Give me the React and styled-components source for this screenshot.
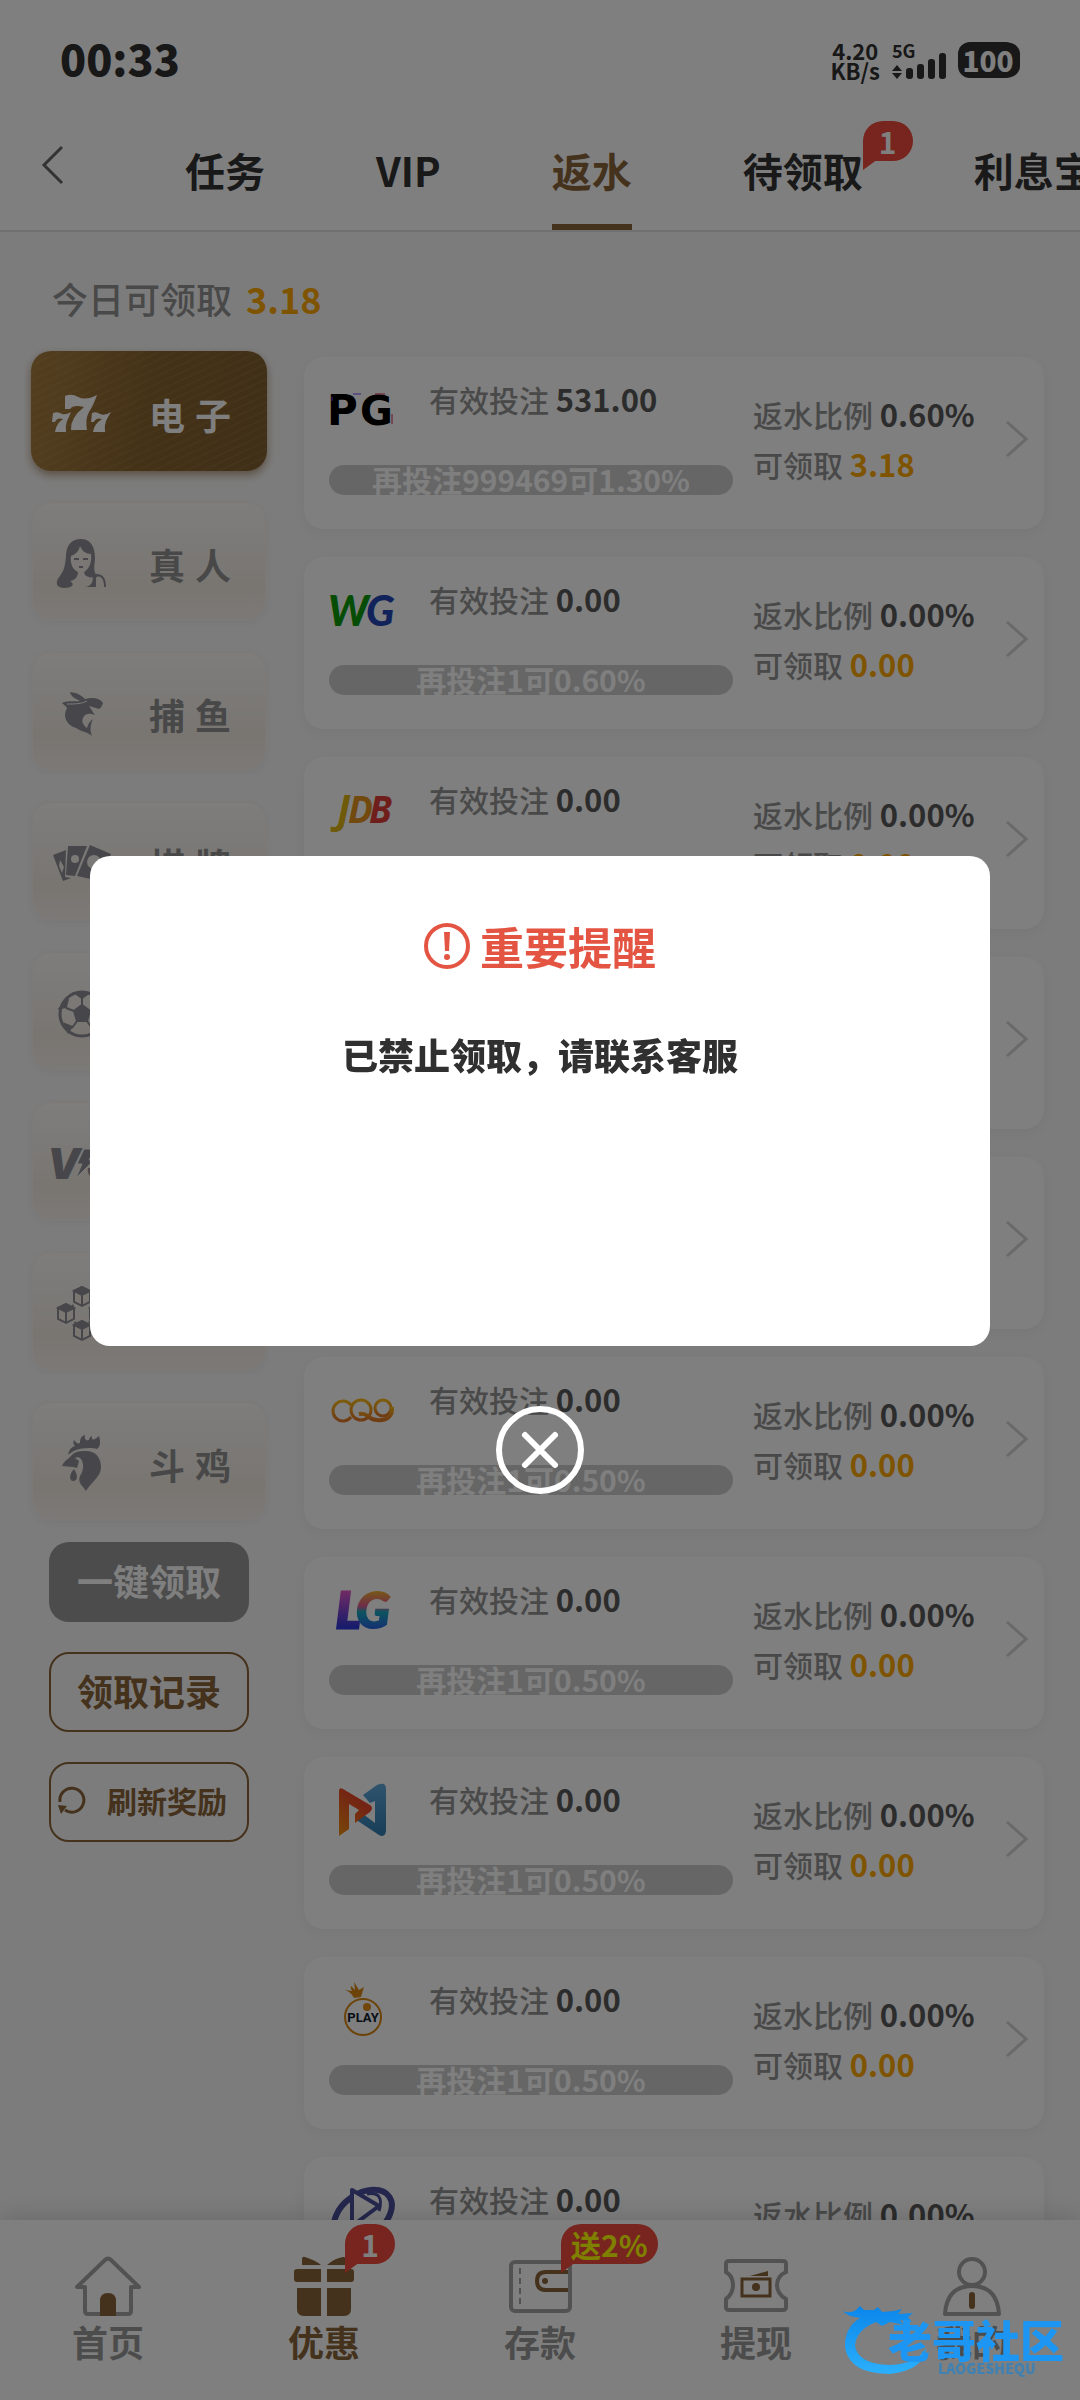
import React from "react";
import styled, { createGlobalStyle } from "styled-components";

const tabs = [
  { label: "任务" },
  { label: "VIP" },
  { label: "返水", active: true },
  { label: "待领取", badge: "1" },
  { label: "利息宝" },
];

const Sevens = () => (
  <svg viewBox="0 0 60 60" fill="currentColor">
    <path d="M14 12 Q21 9 27 13 Q35 17 46 11 Q42 22 38 28 Q34 35 36 46 H20 Q19 34 33 23 Q22 20 19 25 L14 25Z" />
    <path d="M2 29 Q7 27 11 30 Q15 31 20 28 Q18 33 16 37 Q14 42 15 48 H4 Q5 40 12 35 Q6 33 4 38 H1Z" />
    <path d="M41 29 Q45 27 49 30 Q54 32 60 28 Q57 33 55 37 Q53 42 54 48 H42 Q43 40 51 35 Q45 33 43 38 H40Z" />
  </svg>
);

const Lady = () => (
  <svg viewBox="0 0 60 60" fill="currentColor">
    <path
      fillRule="evenodd"
      d="M30 5 C20 5 15 12 15 22 C14 33 13 36 9 42 C3 49 6 54 13 54 C22 54 24 50 19 47 C25 46 27 42 27 38 C21 35 19 29 20 22 C25 20 28 17 29 12 C31 17 35 20 40 20 C41 29 38 35 33 38 L34 41 C38 44 42 44 47 43 C41 37 44 31 44 24 C44 12 39 5 30 5Z"
    />
    <path d="M23 25 h5 M32 25 h5 M28 33 h4" stroke="currentColor" strokeWidth="2" />
    <path d="M34 53 C41 52 42 48 42 41 L45 40 V53Z" />
    <path d="M44 41 C52 40 54 46 54 53" fill="none" stroke="currentColor" strokeWidth="2" />
  </svg>
);

const Shark = () => (
  <svg viewBox="0 0 60 60" fill="currentColor">
    <path d="M19 8 C27 9 31 12 34 15 C42 13 49 14 52 19 C51 22 50 24 48 25 L38 22 C41 26 42 29 44 31 C39 29 34 29 32 34 C30 38 33 42 36 44 C37 40 39 37 42 35 C39 41 39 47 41 52 C37 48 31 48 25 44 C16 41 11 33 16 24 C15 22 12 20 11 19 C18 16 24 18 29 17 C24 14 20 13 19 8Z" />
    <path d="M16 20 C24 20 30 20 36 17" fill="none" stroke="#f8f4ee" strokeWidth="1" />
  </svg>
);

const Cards = () => (
  <svg viewBox="0 0 60 60" fill="currentColor">
    <path d="M2 21 L15 16 L14 43 L20 44 L12 47Z" />
    <path d="M17 12 H36 L24 42 L15 41Z" />
    <path d="M39 11 L60 20 L49 47 L26 42Z" />
    <circle cx="24" cy="25" r="4" fill="#f7f2ec" />
    <circle cx="43" cy="28" r="7" fill="#f7f2ec" />
    <path d="M9 26 L13 33 L11 39 L8 32Z" fill="#f7f2ec" />
  </svg>
);

const Soccer = () => (
  <svg viewBox="0 0 60 60" fill="none" stroke="currentColor" strokeWidth="2">
    <circle cx="31" cy="30" r="22" strokeWidth="3" />
    <path d="M31 21 L39 27 L36 37 H26 L23 27Z" fill="currentColor" />
    <path d="M31 21 V13 M39 27 L47 24 M36 37 L41 44 M26 37 L21 44 M23 27 L15 24" />
    <path
      d="M24 9 L31 14 L38 9Z M9 24 L15 23 L17 15Z M53 24 L47 23 L45 15Z M17 48 L21 43 L14 40Z M45 48 L41 43 L48 40Z"
      fill="currentColor"
    />
  </svg>
);

const Versus = () => (
  <svg viewBox="0 0 60 60" fill="currentColor">
    <text x="-4" y="45" fontFamily="Inter" fontSize="42" fontWeight="900" fontStyle="italic">
      V
    </text>
    <path d="M33 15 H44 L38 26 H43 L25 44 L31 30 H26Z" stroke="#f8f4ee" strokeWidth="1" />
    <text x="36" y="45" fontFamily="Inter" fontSize="42" fontWeight="900" fontStyle="italic">
      S
    </text>
  </svg>
);

const cubeSpots = [
  [31, 12],
  [15, 29],
  [47, 29],
  [31, 46],
];

const Blocks = () => (
  <svg viewBox="0 0 60 60" fill="none" stroke="currentColor" strokeWidth="2">
    <path d="M15 29 L31 12 L47 29 L31 46Z" strokeDasharray="4 3" />
    {cubeSpots.map(([x, y]) => (
      <g key={`${x}-${y}`} transform={`translate(${x} ${y})`}>
        <path d="M-8 -5 L0 -9 L8 -5 V6 L0 10 L-8 6Z" fill="#f5eee6" />
        <path d="M-8 -5 L0 -9 L8 -5 L0 -1Z" fill="currentColor" />
        <path d="M0 -1 V10" />
      </g>
    ))}
  </svg>
);

const Rooster = () => (
  <svg viewBox="0 0 60 60" fill="currentColor">
    <path d="M17 21 C18 16 20 13 24 12 C22 10 22 8 23 6 C25 9 27 10 29 9 C29 5 30 2 34 1 C33 5 35 7 38 6 C38 4 39 3 41 2 C40 6 43 7 48 2 C50 9 49 13 46 15 C40 13 30 14 25 16 C21 18 19 19 17 21Z" />
    <path d="M33 17 C44 16 50 23 50 33 C50 43 41 47 35 57 C33 53 26 49 29 42 C33 36 33 29 30 25 C28 23 26 23 24 24 L28 27 L26 34 L22 33 L11 32 C13 27 17 25 20 22 C23 18 28 17 33 17Z" />
    <path d="M23 35 C18 40 18 47 22 47 C27 47 27 41 23 35Z" />
  </svg>
);

const categories = [
  { label: "电子", Icon: Sevens, active: true },
  { label: "真人", Icon: Lady },
  { label: "捕鱼", Icon: Shark },
  { label: "棋牌", Icon: Cards },
  { label: "体育", Icon: Soccer },
  { label: "电竞", Icon: Versus },
  { label: "区块", Icon: Blocks },
  { label: "斗鸡", Icon: Rooster },
];

const PgLogo = () => (
  <svg viewBox="0 0 66 60" fontFamily="DejaVu Sans" fontSize="42" fontWeight="700">
    <text x="-2" y="44" fill="#000">
      P
    </text>
    <path d="M3 16 V20 M24 13 H32" stroke="#7040ff" strokeWidth="1" />
    <text x="31" y="44" fontSize="40" fill="#000">
      G
    </text>
    <path d="M63 33 V43 M46 13 H56" stroke="#d02048" strokeWidth="1" />
  </svg>
);

const WgLogo = () => (
  <svg viewBox="0 0 66 60" fontFamily="Lato" fontWeight="900" fontStyle="italic">
    <text x="-1" y="45" fontSize="42" fill="#0b9a0b">W</text>
    <text x="37" y="45" fontSize="42" fill="#2444b4">G</text>
  </svg>
);

const JdbLogo = () => (
  <svg viewBox="0 0 66 60" fontFamily="Open Sans" fontWeight="700" fontStyle="italic">
    <text x="8" y="42" fontSize="40" fill="#dcb410">J</text>
    <text x="19" y="42" fontSize="37" fill="#e49420">D</text>
    <text x="40" y="42" fontSize="37" fill="#e03c38">B</text>
  </svg>
);

const CqLogo = () => (
  <svg viewBox="0 0 66 60" fill="none" strokeWidth="3">
    <defs>
      <linearGradient id="cq" x1="0" y1="0" x2="0" y2="1">
        <stop offset="0" stopColor="#f8b818" />
        <stop offset="1" stopColor="#e07828" />
      </linearGradient>
    </defs>
    <path d="M22 24 A10 10 0 1 0 22 36" stroke="url(#cq)" />
    <circle cx="32" cy="29" r="10" stroke="url(#cq)" />
    <circle cx="54" cy="27" r="8" stroke="url(#cq)" />
    <path d="M30 33 C40 31 38 39 48 39 C58 40 64 35 63 26" stroke="url(#cq)" strokeWidth="4" />
  </svg>
);

const LgLogo = () => (
  <svg viewBox="0 0 66 60" fontFamily="Lato" fontSize="50" fontWeight="900" fontStyle="italic">
    <defs>
      <linearGradient id="lg-l" x1="0" y1="0" x2="0" y2="1">
        <stop offset="0.2" stopColor="#e056c8" />
        <stop offset="0.8" stopColor="#3038d8" />
      </linearGradient>
      <linearGradient id="lg-g" x1="0" y1="0" x2="0" y2="1">
        <stop offset="0.2" stopColor="#f0b030" />
        <stop offset="0.45" stopColor="#e05890" />
        <stop offset="0.55" stopColor="#18a8c0" />
        <stop offset="0.8" stopColor="#2868e0" />
      </linearGradient>
    </defs>
    <text x="7" y="47" fill="url(#lg-l)" stroke="url(#lg-l)" strokeWidth="3">L</text>
    <text x="27" y="47" fill="url(#lg-g)" stroke="url(#lg-g)" strokeWidth="2">G</text>
  </svg>
);

const RibbonLogo = () => (
  <svg viewBox="0 0 66 60">
    <defs>
      <linearGradient id="rb-red" x1="0.6" y1="0" x2="0" y2="1">
        <stop offset="0.2" stopColor="#e84828" />
        <stop offset="1" stopColor="#f09010" />
      </linearGradient>
      <linearGradient id="rb-blue" x1="0" y1="0" x2="0" y2="1">
        <stop offset="0" stopColor="#60a8dc" />
        <stop offset="1" stopColor="#307cb0" />
      </linearGradient>
    </defs>
    <path d="M34 14 L48 4 Q57 0 57 8 V50 Q56 57 50 54 L26 38 L34 33 L46 42 V20 L41 22Z" fill="url(#rb-blue)" />
    <path d="M10 10 Q10 6 14 8 L41 24 Q45 27 41 31 L26 42 V33 L30 29 L20 23 V48 L10 55Z" fill="url(#rb-red)" />
  </svg>
);

const PlayLogo = () => (
  <svg viewBox="0 0 66 60">
    <path d="M25 17 Q22 11 16 9 L23 10 Q21 6 22 5 L26 9 L25 1 L30 9 L35 6 L32 16Z" fill="#d88814" />
    <circle cx="34" cy="36" r="18" fill="none" stroke="#d88814" strokeWidth="2" />
    <circle cx="38" cy="26" r="4" fill="#e08c14" />
    <text x="34" y="41" textAnchor="middle" fontFamily="Roboto" fontSize="13" fontWeight="700" fill="#102030">
      PLAY
    </text>
  </svg>
);

const OrbitLogo = () => (
  <svg viewBox="0 0 66 60" fill="none" stroke="#4a4e9c">
    <ellipse cx="34" cy="34" rx="32" ry="21" transform="rotate(-35 34 34)" strokeWidth="6" />
    <path d="M23 9 L50 25 L23 45Z" fill="#fff" strokeWidth="4" strokeLinejoin="round" />
    <path d="M38 13 Q56 10 50 30" strokeWidth="3" />
  </svg>
);

const platforms = [
  { Logo: PgLogo, bet: "531.00", hint: "再投注999469可1.30%", rate: "0.60%", claim: "3.18" },
  { Logo: WgLogo, bet: "0.00", hint: "再投注1可0.60%", rate: "0.00%", claim: "0.00" },
  { Logo: JdbLogo, bet: "0.00", hint: "再投注1可0.50%", rate: "0.00%", claim: "0.00" },
  { Logo: PgLogo, bet: "0.00", hint: "再投注1可0.50%", rate: "0.00%", claim: "0.00" },
  { Logo: WgLogo, bet: "0.00", hint: "再投注1可0.50%", rate: "0.00%", claim: "0.00" },
  { Logo: CqLogo, bet: "0.00", hint: "再投注1可0.50%", rate: "0.00%", claim: "0.00" },
  { Logo: LgLogo, bet: "0.00", hint: "再投注1可0.50%", rate: "0.00%", claim: "0.00" },
  { Logo: RibbonLogo, bet: "0.00", hint: "再投注1可0.50%", rate: "0.00%", claim: "0.00" },
  { Logo: PlayLogo, bet: "0.00", hint: "再投注1可0.50%", rate: "0.00%", claim: "0.00" },
  { Logo: OrbitLogo, bet: "0.00", hint: "再投注1可0.50%", rate: "0.00%", claim: "0.00" },
];

const HomeIcon = () => (
  <svg viewBox="0 0 66 60" fill="none" stroke="#a4a4a4" strokeWidth="4" strokeLinejoin="round" strokeLinecap="round">
    <path d="M10 31 H2 L30 4 Q33 1 36 4 L64 31 H56 V55 Q56 58 53 58 H13 Q10 58 10 55Z" />
    <path d="M25 60 V45 Q25 37 33 37 Q41 37 41 45 V60Z" fill="#8a6438" stroke="none" />
  </svg>
);

const GiftIcon = () => (
  <svg viewBox="0 0 66 60" fill="#8a6438">
    <path d="M11 9 V3 Q11 0 14 1 Q24 4 30 9Z M36 9 Q44 2 52 1 Q56 0 56 9Z" />
    <path d="M6 13 H30 V26 H6 Q3 26 3 23 V16 Q3 13 6 13Z M36 13 H60 Q63 13 63 16 V23 Q63 26 60 26 H36Z" />
    <path d="M6 32 H30 V60 H13 Q6 60 6 53Z M36 32 H60 V53 Q60 60 53 60 H36Z" />
  </svg>
);

const WalletIcon = () => (
  <svg viewBox="0 0 66 60" fill="none" stroke="#a4a4a4" strokeWidth="4">
    <rect x="4" y="6" width="59" height="49" rx="4" />
    <path d="M13 12 V50" strokeWidth="2" strokeDasharray="6 4" />
    <path d="M61 16 H39 Q30 16 30 25 Q30 34 39 34 H61" stroke="#8a6438" />
    <circle cx="38" cy="25" r="3" fill="#8a6438" stroke="none" />
  </svg>
);

const TicketIcon = () => (
  <svg viewBox="0 0 66 60" fill="none" stroke="#a4a4a4" strokeWidth="4">
    <path d="M6 5 H60 Q63 5 63 8 V16 Q54 20 54 29 Q54 38 63 43 V51 Q63 54 60 54 H6 Q3 54 3 51 V43 Q10 38 10 29 Q10 20 3 16 V8 Q3 5 6 5Z" />
    <rect x="19" y="23" width="28" height="17" stroke="#8a6438" strokeWidth="3" />
    <circle cx="33" cy="31" r="4" fill="#8a6438" stroke="none" />
    <path d="M27 20 L45 15 V20Z" fill="#8a6438" stroke="none" />
  </svg>
);

const UserIcon = () => (
  <svg viewBox="0 0 66 60" fill="none" stroke="#a4a4a4" strokeWidth="4">
    <circle cx="33" cy="16" r="13" />
    <path d="M6 58 Q8 30 33 30 Q58 30 60 58Z" strokeLinejoin="round" />
    <path d="M33 39 V50" stroke="#8a6438" strokeWidth="6" strokeLinecap="round" />
  </svg>
);

const navItems = [
  { label: "首页", Icon: HomeIcon },
  { label: "优惠", Icon: GiftIcon, active: true, badge: "1" },
  { label: "存款", Icon: WalletIcon, badge: "送2%", promo: true },
  { label: "提现", Icon: TicketIcon },
  { label: "我的", Icon: UserIcon },
];

const StatusBar = () => (
  <StatusWrapper>
    <Clock>00:33</Clock>
    <StatusGroup>
      <NetSpeed>
        4.20
        <span>KB/s</span>
      </NetSpeed>
      <Signal>
        5G
        <svg viewBox="0 0 54 26" width="54" height="26" fill="currentColor">
          <path d="M0 18 L5 12 L10 18Z M0 20 L5 26 L10 20Z" />
          <rect x="14" y="15" width="7" height="11" rx="3" />
          <rect x="25" y="11" width="7" height="15" rx="3" />
          <rect x="36" y="6" width="7" height="20" rx="3" />
          <rect x="47" y="0" width="7" height="26" rx="3" />
        </svg>
      </Signal>
      <Battery>100</Battery>
    </StatusGroup>
  </StatusWrapper>
);

const RebateCard = ({ Logo, bet, hint, rate, claim }) => (
  <Card>
    <CardMain>
      <CardTop>
        <LogoBox>
          <Logo />
        </LogoBox>
        <Line>
          有效投注 <Value>{bet}</Value>
        </Line>
      </CardTop>
      <Hint>{hint}</Hint>
    </CardMain>
    <CardInfo>
      <InfoLine>
        返水比例 <Value>{rate}</Value>
      </InfoLine>
      <InfoLine>
        可领取 <Value $gold>{claim}</Value>
      </InfoLine>
    </CardInfo>
    <svg width="24" height="38" viewBox="0 0 24 38" fill="none" stroke="#d2d2d2" strokeWidth="3">
      <path d="M2 2 L21 19 L2 36" />
    </svg>
  </Card>
);

const App = () => {
  return (
    <>
      <GlobalStyle />
      <Page>
        <StatusBar />
        <Header>
          <BackButton aria-label="返回">
            <svg width="24" height="40" viewBox="0 0 24 40" fill="none" stroke="#666" strokeWidth="3">
              <path d="M21 2 L3 20 L21 38" />
            </svg>
          </BackButton>
          <Tabs>
            {tabs.map((tab) => (
              <Tab key={tab.label} $active={tab.active}>
                {tab.label}
                {tab.badge && <TabBadge>{tab.badge}</TabBadge>}
              </Tab>
            ))}
          </Tabs>
        </Header>
        <Content>
          <Summary>
            今日可领取
            <Total>3.18</Total>
          </Summary>
          <Columns>
            <Sidebar>
              {categories.map(({ label, Icon, active }) => (
                <Category key={label} $active={active}>
                  <Icon />
                  <CategoryLabel $active={active}>
                    {[...label].map((char) => (
                      <span key={char}>{char}</span>
                    ))}
                  </CategoryLabel>
                </Category>
              ))}
              <Actions>
                <ClaimButton>一键领取</ClaimButton>
                <OutlineButton>领取记录</OutlineButton>
                <RefreshButton>
                  <svg width="30" height="30" viewBox="0 0 30 30" fill="none" stroke="currentColor" strokeWidth="3">
                    <path d="M3 17 A12 12 0 1 1 8 25" />
                    <path d="M1 20 L10 21 L4 29Z" fill="currentColor" stroke="none" />
                  </svg>
                  刷新奖励
                </RefreshButton>
              </Actions>
            </Sidebar>
            <CardList>
              {platforms.map((platform, index) => (
                <RebateCard key={index} {...platform} />
              ))}
            </CardList>
          </Columns>
        </Content>
        <BottomNav>
          {navItems.map(({ label, Icon, active, badge, promo }) => (
            <NavItem key={label} href="#" $active={active}>
              <Icon />
              {label}
              {badge && <NavBadge $promo={promo}>{badge}</NavBadge>}
            </NavItem>
          ))}
        </BottomNav>
      </Page>
      <Overlay>
        <Modal role="dialog" aria-labelledby="notice-title">
          <ModalTitle id="notice-title">
            <svg width="46" height="46" viewBox="0 0 46 46" fill="none" stroke="currentColor" strokeWidth="4">
              <circle cx="23" cy="23" r="21" />
              <path d="M20 9 H26 L25 28 H21Z" fill="currentColor" stroke="none" />
              <circle cx="23" cy="34" r="3" fill="currentColor" stroke="none" />
            </svg>
            重要提醒
          </ModalTitle>
          <ModalText>已禁止领取，请联系客服</ModalText>
        </Modal>
        <CloseButton aria-label="关闭">
          <svg width="88" height="88" viewBox="0 0 88 88" fill="none" stroke="#fff" strokeWidth="6">
            <circle cx="44" cy="44" r="41" />
            <path d="M29 29 L59 59 M59 29 L29 59" strokeLinecap="round" />
          </svg>
        </CloseButton>
      </Overlay>
      <Watermark>
        <svg viewBox="0 0 96 72" width="96" height="72">
          <defs>
            <linearGradient id="wm" x1="0" y1="0" x2="0" y2="1">
              <stop offset="0" stopColor="#0a86ea" />
              <stop offset="1" stopColor="#2cb0fc" />
            </linearGradient>
          </defs>
          <path
            d="M0 7 Q8 10 14 6 L18 2 L22 6 L32 6 L36 3 L40 8 L52 7 L60 5 L56 10 L71 9 L66 13 L70 18 L58 16 L62 21 L48 18 L40 22 L34 18 Q14 26 13 42 Q16 60 48 61 Q74 60 84 44 Q82 66 48 70 Q8 70 3 44 Q2 24 18 14 L8 12Z"
            fill="url(#wm)"
          />
        </svg>
        <WatermarkText>
          老哥社区
          <small>LAOGESHEQU</small>
        </WatermarkText>
      </Watermark>
    </>
  );
};

const GlobalStyle = createGlobalStyle`
  * {
    box-sizing: border-box;
  }
  body {
    margin: 0;
    font-family: "Noto Sans CJK SC", sans-serif;
    overflow: hidden;
  }
  button {
    font-family: inherit;
    border: none;
    background: none;
    padding: 0;
  }
  svg {
    display: block;
    flex-shrink: 0;
    overflow: visible;
  }
`;

const Page = styled.div`
  display: flex;
  flex-direction: column;
  height: 100vh;
  background-color: #f9f9f9;
`;

const StatusWrapper = styled.div`
  display: flex;
  align-items: center;
  justify-content: space-between;
  flex-shrink: 0;
  height: 120px;
  padding: 0 62px 4px 60px;
  background-color: white;
  color: #303030;
`;

const Clock = styled.span`
  padding-bottom: 2px;
  font-size: 43px;
  font-weight: 900;
  line-height: 60px;
`;

const StatusGroup = styled.div`
  display: flex;
  align-items: center;
  gap: 12px;
  padding-top: 4px;
`;

const NetSpeed = styled.div`
  display: flex;
  flex-direction: column;
  align-items: center;
  font-size: 22px;
  font-weight: 700;
  line-height: 20px;
`;

const Signal = styled.div`
  font-size: 18px;
  font-weight: 700;
  line-height: 16px;

  svg {
    margin-top: -5px;
  }
`;

const Battery = styled.div`
  width: 60px;
  height: 36px;
  border-radius: 12px;
  background-color: #303030;
  box-shadow: 3px 0 0 -1px #303030;
  color: white;
  font-size: 28px;
  font-weight: 900;
  line-height: 36px;
  text-align: center;
`;

const Header = styled.header`
  display: flex;
  flex-shrink: 0;
  height: 112px;
  background-color: white;
  border-bottom: 2px solid #e0e0e0;
`;

const BackButton = styled.button`
  display: flex;
  flex-shrink: 0;
  width: 185px;
  padding: 25px 0 0 41px;
`;

const Tabs = styled.nav`
  display: flex;
  gap: 111px;
`;

const Tab = styled.button`
  position: relative;
  flex-shrink: 0;
  height: 110px;
  padding-bottom: 4px;
  border-bottom: 6px solid ${({ $active }) => ($active ? "#8a6438" : "transparent")};
  color: ${({ $active }) => ($active ? "#8a6438" : "#333")};
  font-size: 40px;
  font-weight: 700;
  line-height: 90px;
`;

const Badge = styled.span`
  position: absolute;
  min-width: 50px;
  height: 40px;
  padding: 0 10px;
  border-radius: 20px 20px 20px 0;
  background-color: #ee4a3c;
  color: white;
  font-size: 30px;
  font-weight: 700;
  line-height: 40px;
  text-align: center;
  white-space: nowrap;

  /* speech bubble tail */
  &::after {
    content: "";
    position: absolute;
    left: 0;
    top: 38px;
    border-top: 11px solid #ee4a3c;
    border-right: 15px solid transparent;
  }
`;

const TabBadge = styled(Badge)`
  left: 100%;
  top: 1px;
`;

const NavBadge = styled(Badge)`
  left: calc(50% + 21px);
  top: 4px;
  color: ${({ $promo }) => ($promo ? "#ffff00" : "white")};
`;

const Content = styled.main`
  flex: 1;
  min-height: 0;
  overflow: hidden;
`;

const Summary = styled.p`
  display: flex;
  gap: 14px;
  margin: 0;
  padding: 36px 52px 23px;
  color: #929292;
  font-size: 36px;
  font-weight: 500;
  line-height: 60px;
`;

const Total = styled.span`
  color: #ffa800;
  font-weight: 700;
`;

const Columns = styled.div`
  display: flex;
  align-items: flex-start;
  gap: 37px;
  padding: 0 36px 0 31px;
`;

const Sidebar = styled.aside`
  display: flex;
  flex-direction: column;
  flex-shrink: 0;
  gap: 30px;
  width: 236px;
`;

const Category = styled.button`
  display: flex;
  align-items: center;
  gap: 38px;
  height: 120px;
  padding: 6px 0 0 18px;
  border: 2px solid ${({ $active }) => ($active ? "transparent" : "#f6f4f2")};
  border-radius: 20px;
  background: ${({ $active }) =>
    $active
      ? "repeating-linear-gradient(155deg, transparent 0 5px, rgba(255, 220, 150, 0.06) 5px 7px), linear-gradient(100deg, #a87e40, #88642f 50%, #806030)"
      : "linear-gradient(#fdfbf9, #f2ece4 70%, #f8f3ed)"};
  background-origin: border-box;
  box-shadow: ${({ $active }) =>
    $active ? "0 4px 8px rgba(138, 100, 56, 0.6)" : "0 2px 8px rgba(0, 0, 0, 0.05)"};
  color: ${({ $active }) => ($active ? "white" : "#8e8e96")};

  svg {
    width: 60px;
    height: 60px;
  }
`;

const CategoryLabel = styled.span`
  display: flex;
  gap: 10px;
  color: ${({ $active }) => ($active ? "white" : "#909090")};
  font-size: 36px;
  font-weight: 700;
`;

const Actions = styled.div`
  display: flex;
  flex-direction: column;
  gap: 30px;
  margin-top: -9px;
  padding: 0 18px;
`;

const ClaimButton = styled.button`
  height: 80px;
  padding-bottom: 4px;
  border-radius: 20px;
  background-color: #999;
  color: white;
  font-size: 36px;
  font-weight: 700;
`;

const OutlineButton = styled(ClaimButton)`
  border: 2px solid #8a6438;
  background-color: transparent;
  color: #8a6438;
`;

const RefreshButton = styled(OutlineButton)`
  display: flex;
  align-items: center;
  gap: 20px;
  padding-left: 6px;
  font-size: 30px;
`;

const CardList = styled.div`
  display: flex;
  flex-direction: column;
  flex: 1;
  gap: 28px;
  padding-top: 6px;
`;

const Card = styled.section`
  display: flex;
  align-items: center;
  gap: 20px;
  height: 172px;
  padding: 0 15px 8px 25px;
  border-radius: 20px;
  background-color: white;
  box-shadow: 0 4px 16px rgba(0, 0, 0, 0.05);
`;

const CardMain = styled.div`
  flex: 1;
  align-self: flex-start;
  padding-top: 24px;
`;

const CardTop = styled.div`
  display: flex;
  gap: 34px;
  height: 84px;
`;

const LogoBox = styled.div`
  width: 66px;
  height: 60px;
`;

const Line = styled.div`
  color: #929292;
  font-size: 30px;
  font-weight: 500;
  line-height: 36px;
  white-space: pre;
`;

const Value = styled.span`
  color: ${({ $gold }) => ($gold ? "#ffa800" : "#585858")};
  font-size: 31px;
  font-weight: 700;
`;

const Hint = styled.div`
  height: 30px;
  border-radius: 15px;
  background-color: #ccc;
  color: white;
  font-size: 30px;
  font-weight: 700;
  line-height: 28px;
  text-align: center;
  white-space: nowrap;
`;

const CardInfo = styled.div`
  width: 232px;
`;

const InfoLine = styled(Line)`
  line-height: 50px;
`;

const BottomNav = styled.nav`
  position: relative;
  display: flex;
  flex-shrink: 0;
  height: 180px;
  background-color: white;
  box-shadow: 0 -4px 24px rgba(0, 0, 0, 0.15);
`;

const NavItem = styled.a`
  position: relative;
  display: flex;
  flex: 1;
  flex-direction: column;
  align-items: center;
  padding-top: 36px;
  color: ${({ $active }) => ($active ? "#8a6438" : "#999")};
  font-size: 36px;
  font-weight: 700;
  line-height: 50px;
  text-decoration: none;

  svg {
    width: 66px;
    height: 60px;
  }
`;

const Overlay = styled.div`
  position: fixed;
  inset: 0;
  display: flex;
  flex-direction: column;
  align-items: center;
  justify-content: center;
  gap: 60px;
  padding: 0 90px 50px;
  background-color: rgba(0, 0, 0, 0.5);
`;

const Modal = styled.div`
  width: 100%;
  min-height: 490px;
  padding-top: 60px;
  border-radius: 20px;
  background-color: white;
  text-align: center;
`;

const ModalTitle = styled.h2`
  display: flex;
  align-items: center;
  justify-content: center;
  gap: 10px;
  margin: 0;
  color: #e45443;
  font-size: 44px;
  font-weight: 700;
  line-height: 60px;
`;

const ModalText = styled.p`
  margin: 48px 0 0;
  color: #303030;
  font-size: 36px;
  font-weight: 900;
  line-height: 60px;
`;

const CloseButton = styled.button`
  width: 88px;
  height: 88px;
`;

// Community stamp, stays above the dimmed page.
const Watermark = styled.div`
  position: fixed;
  right: 16px;
  bottom: 24px;
  display: flex;
  color: #1c96f2;
  pointer-events: none;
`;

const WatermarkText = styled.div`
  margin: 14px 0 0 -50px;
  font-size: 44px;
  font-weight: 900;
  line-height: 42px;

  small {
    display: block;
    margin-left: 50px;
    color: rgba(36, 130, 200, 0.7);
    font-size: 14px;
    line-height: 16px;
  }
`;

export default App;
